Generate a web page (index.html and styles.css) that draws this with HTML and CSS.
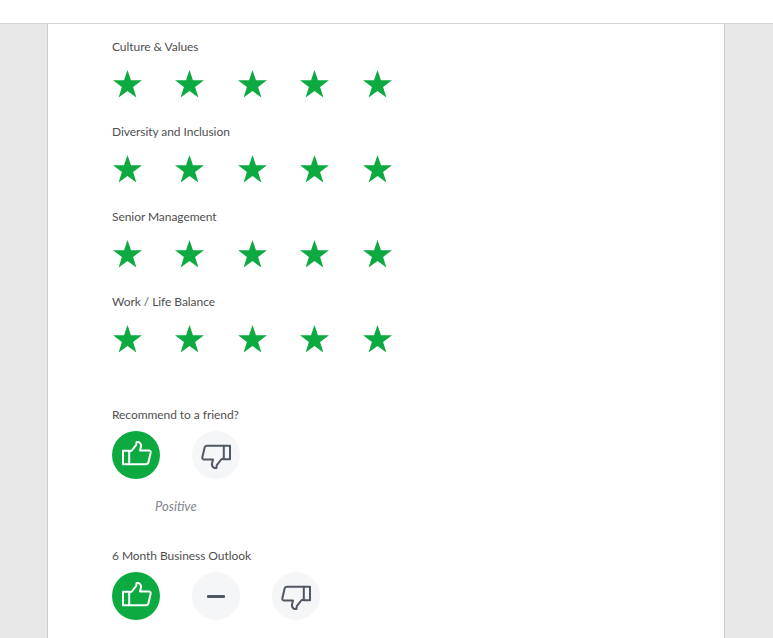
FILE: index.html
```html
<!DOCTYPE html>
<html lang="en">
<head>
    <meta charset="UTF-8">
    <meta name="viewport" content="width=device-width, initial-scale=1.0">
    <title>Review Ratings</title>
    <link rel="stylesheet" href="styles.css">
</head>
<body>
    <svg class="icon-defs" width="0" height="0">
        <defs>
            <polygon id="star" points="15,0 18.6,10.7 30,10.7 20.8,17.5 24.2,28.5 15,21.8 5.8,28.5 9.2,17.5 0,10.7 11.4,10.7"/>
            <g id="thumb" fill="none" stroke-width="2" stroke-linejoin="round" stroke-linecap="round">
                <rect x="11" y="19.8" width="6.2" height="13.4"/>
                <path d="M17.2 20.5 L19.8 19.5 L24.2 13.8 L24.6 11 L26.8 11 Q29.6 12.8 29 15.5 L28 19.6 L37.6 19.6 Q39 20 38.7 21.5 L36.5 31 Q36 33.2 34 33.2 L17.2 33.2"/>
            </g>
        </defs>
    </svg>

    <div class="topbar"></div>
    <div class="page">
        <main class="card">
            <section class="rating">
                <h3 class="label">Culture &amp; Values</h3>
                <div class="stars">
                    <svg class="star" viewBox="0 0 30 29"><use href="#star"/></svg>
                    <svg class="star" viewBox="0 0 30 29"><use href="#star"/></svg>
                    <svg class="star" viewBox="0 0 30 29"><use href="#star"/></svg>
                    <svg class="star" viewBox="0 0 30 29"><use href="#star"/></svg>
                    <svg class="star" viewBox="0 0 30 29"><use href="#star"/></svg>
                </div>
            </section>
            <section class="rating">
                <h3 class="label">Diversity and Inclusion</h3>
                <div class="stars">
                    <svg class="star" viewBox="0 0 30 29"><use href="#star"/></svg>
                    <svg class="star" viewBox="0 0 30 29"><use href="#star"/></svg>
                    <svg class="star" viewBox="0 0 30 29"><use href="#star"/></svg>
                    <svg class="star" viewBox="0 0 30 29"><use href="#star"/></svg>
                    <svg class="star" viewBox="0 0 30 29"><use href="#star"/></svg>
                </div>
            </section>
            <section class="rating">
                <h3 class="label">Senior Management</h3>
                <div class="stars">
                    <svg class="star" viewBox="0 0 30 29"><use href="#star"/></svg>
                    <svg class="star" viewBox="0 0 30 29"><use href="#star"/></svg>
                    <svg class="star" viewBox="0 0 30 29"><use href="#star"/></svg>
                    <svg class="star" viewBox="0 0 30 29"><use href="#star"/></svg>
                    <svg class="star" viewBox="0 0 30 29"><use href="#star"/></svg>
                </div>
            </section>
            <section class="rating">
                <h3 class="label">Work / Life Balance</h3>
                <div class="stars">
                    <svg class="star" viewBox="0 0 30 29"><use href="#star"/></svg>
                    <svg class="star" viewBox="0 0 30 29"><use href="#star"/></svg>
                    <svg class="star" viewBox="0 0 30 29"><use href="#star"/></svg>
                    <svg class="star" viewBox="0 0 30 29"><use href="#star"/></svg>
                    <svg class="star" viewBox="0 0 30 29"><use href="#star"/></svg>
                </div>
            </section>

            <section class="recommend">
                <h3 class="label">Recommend to a friend?</h3>
                <div class="choices">
                    <div class="choice selected"><svg class="thumb" viewBox="0 0 48 48"><use href="#thumb"/></svg></div>
                    <div class="choice"><svg class="thumb down" viewBox="0 0 48 48"><use href="#thumb"/></svg></div>
                </div>
                <p class="choice-text">Positive</p>
            </section>

            <section class="outlook">
                <h3 class="label">6 Month Business Outlook</h3>
                <div class="choices">
                    <div class="choice selected"><svg class="thumb" viewBox="0 0 48 48"><use href="#thumb"/></svg></div>
                    <div class="choice"><span class="dash"></span></div>
                    <div class="choice"><svg class="thumb down" viewBox="0 0 48 48"><use href="#thumb"/></svg></div>
                </div>
            </section>
        </main>
    </div>
</body>
</html>
```

FILE: styles.css
```css
html, body {
    margin: 0;
    height: 100%;
    overflow: hidden;
}
body {
    font-family: Lato, Arial, sans-serif;
    background-color: #e8e8e8;
    color: #505050;
}
.icon-defs {
    display: block;
    height: 0;
}
.topbar {
    height: 23px;
    background-color: #fff;
    border-bottom: 1px solid #d4d4d4;
}
.page {
    padding-left: 47px;
}
.card {
    width: 612px;
    height: 640px;
    padding: 0 0 0 64px;
    background-color: #fff;
    border-left: 1px solid #cdcdcd;
    border-right: 1px solid #cdcdcd;
}
.label {
    margin: 0;
    font-size: 12px;
    font-weight: 400;
    line-height: 16px;
    letter-spacing: -0.06px;
}
.rating {
    height: 85px;
    padding-top: 15px;
    box-sizing: border-box;
}
.stars {
    display: flex;
    gap: 33.4px;
    margin: 15px 0 0 1px;
}
.star {
    display: block;
    width: 29px;
    height: 28px;
    fill: #0caa41;
}
.recommend {
    margin-top: 43px;
}
.choices {
    display: flex;
    gap: 32px;
    margin-top: 8px;
}
.choice {
    display: flex;
    align-items: center;
    justify-content: center;
    width: 48px;
    height: 48px;
    border-radius: 50%;
    background-color: #f5f6f7;
}
.choice.selected {
    background-color: #0caa41;
}
.thumb {
    display: block;
    width: 48px;
    height: 48px;
    stroke: #505863;
}
.selected .thumb {
    stroke: #fff;
}
.thumb.down {
    transform: translateX(1px) rotate(180deg);
}
.dash {
    display: block;
    width: 18px;
    height: 3px;
    border-radius: 1px;
    background-color: #505863;
}
.choice-text {
    margin: 19px 0 0 43px;
    font-size: 13px;
    font-style: italic;
    line-height: 16px;
    color: #7f858d;
}
.outlook {
    margin-top: 34px;
}
```
